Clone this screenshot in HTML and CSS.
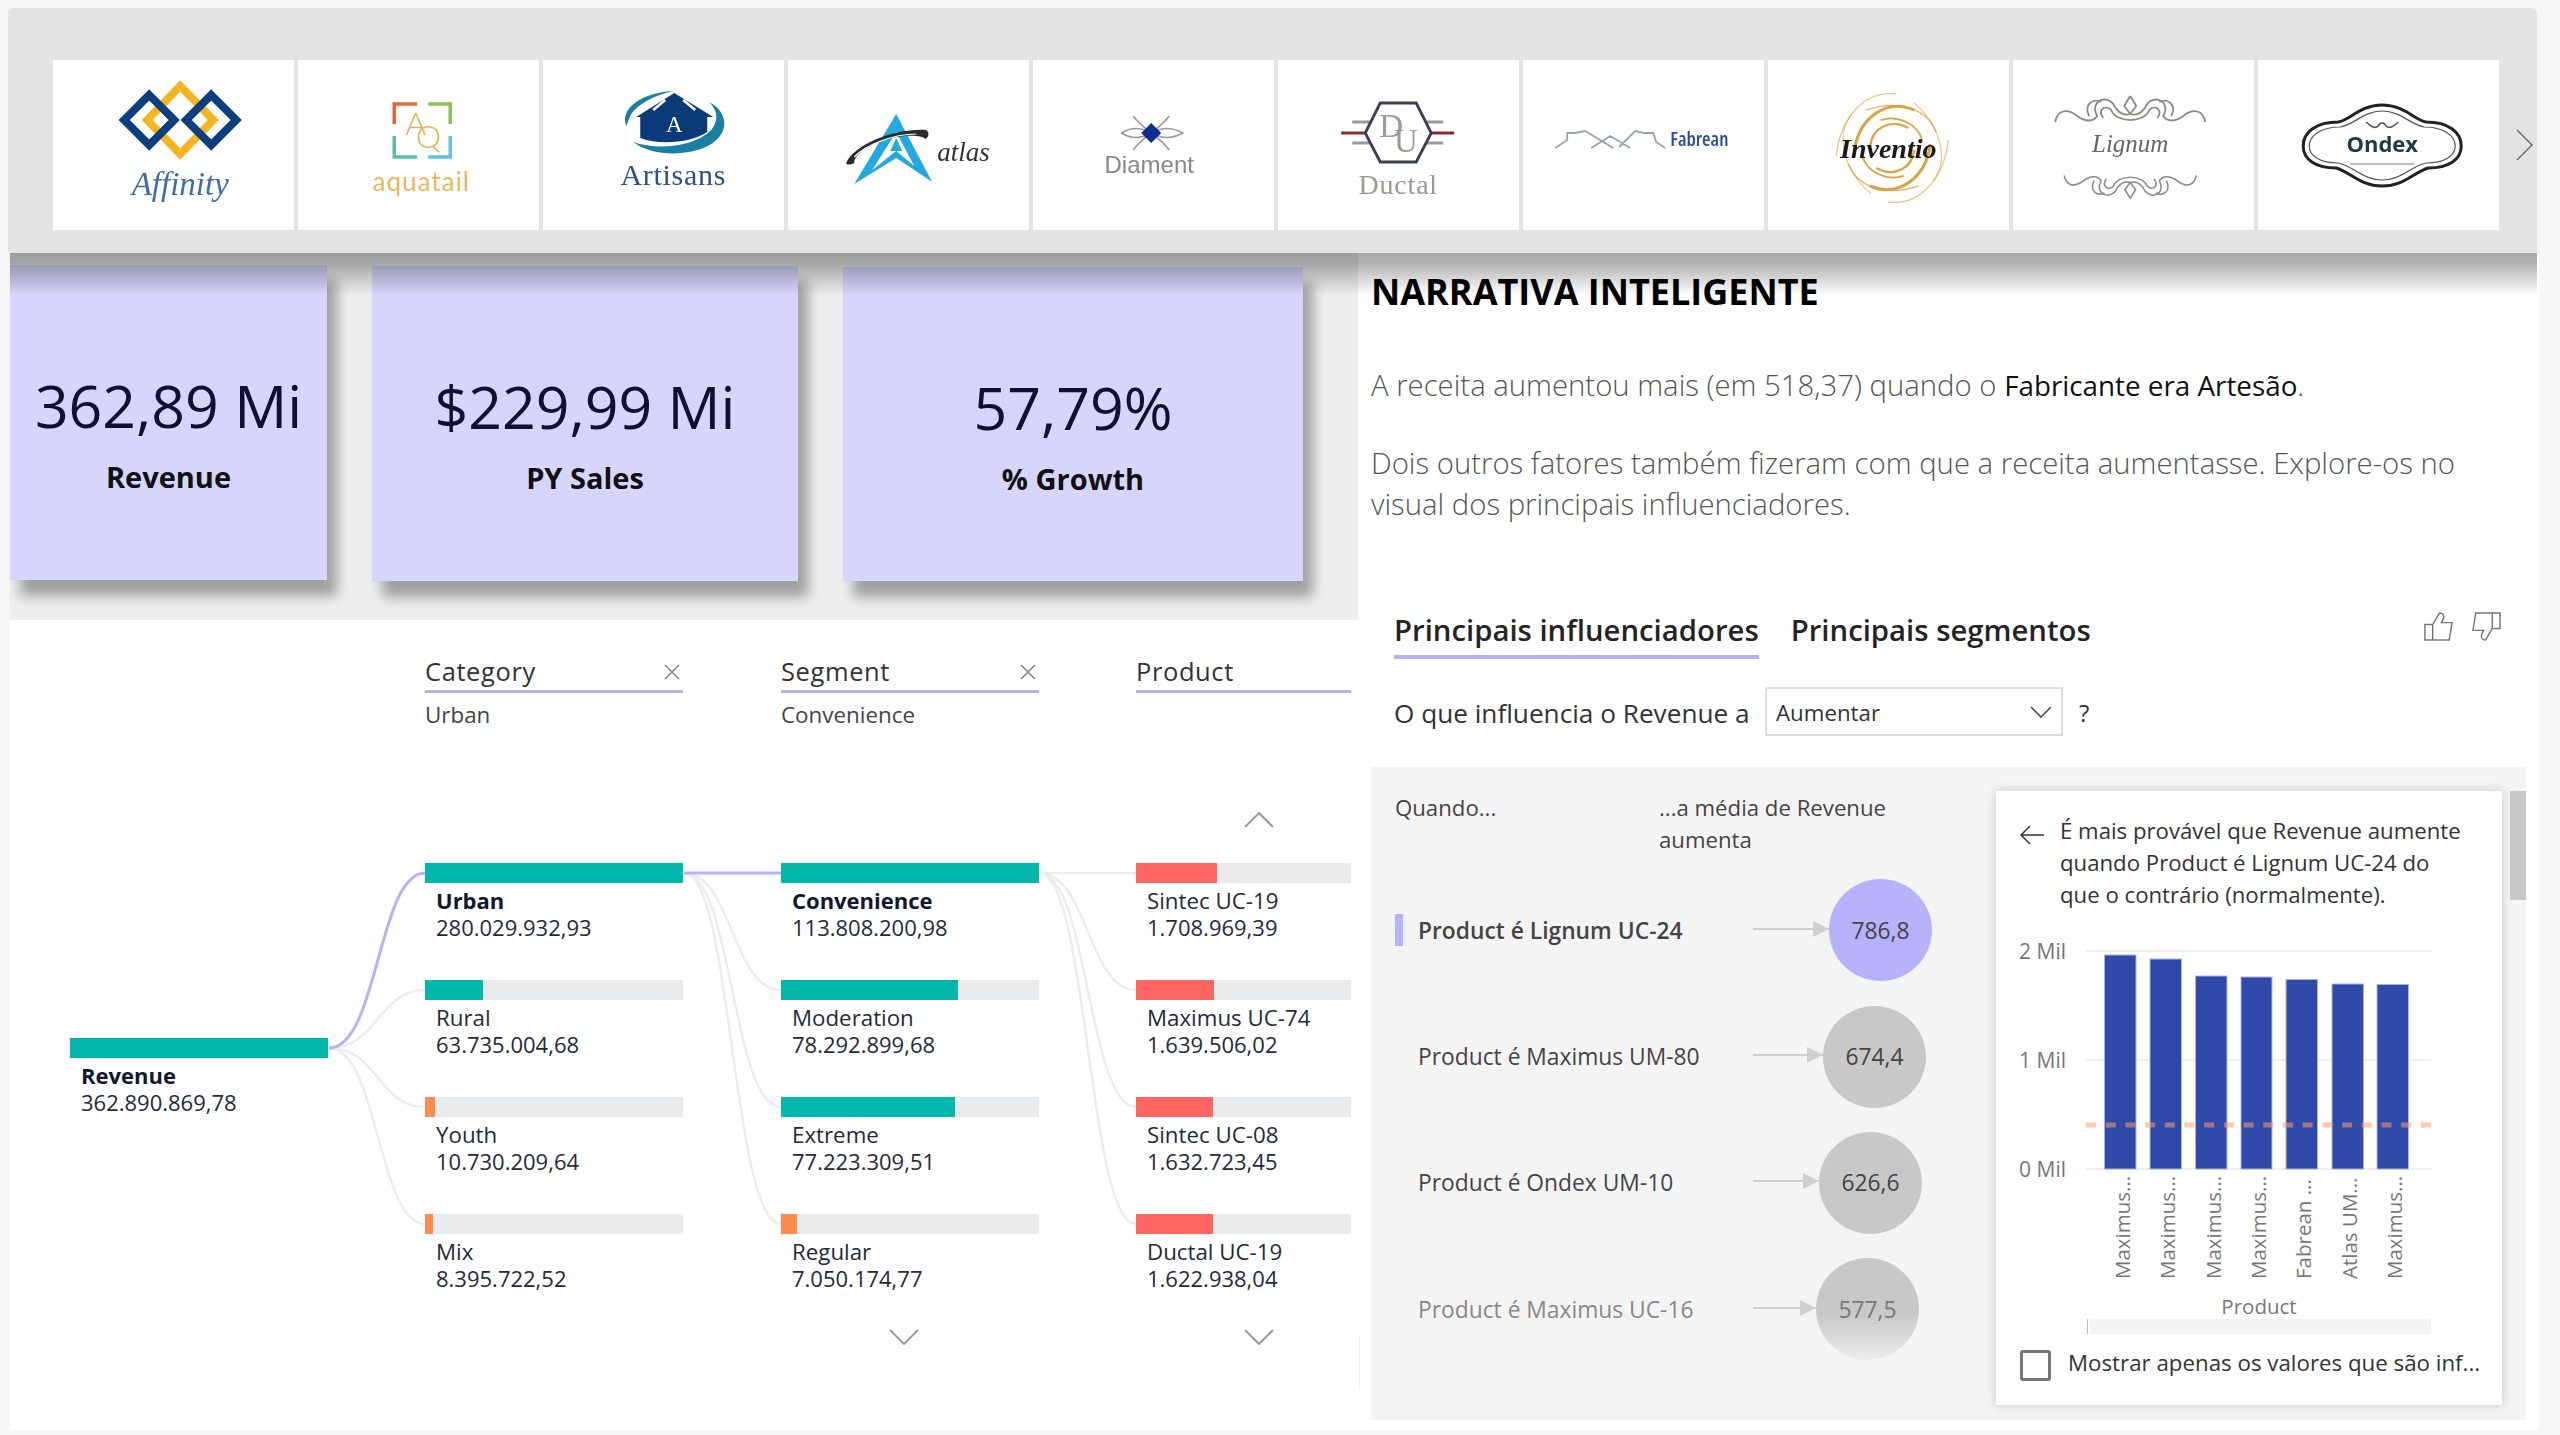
FILE: index.html
```html
<!DOCTYPE html>
<html lang="pt">
<head>
<meta charset="utf-8">
<title>Report</title>
<link rel="stylesheet" href="styles.css">
</head>
<body>
<div class="report">
  <header class="band">
    <div class="logos">
      <div class="logo"><svg viewBox="0 0 241 170"><g fill="none" stroke-width="8"><path d="M127 26 L160 60 L127 94 L94 60 Z" stroke="#f5b51e"/><path d="M96 35 L121 60 L96 85 L71 60 Z" stroke="#0d3f7f"/><path d="M158 35 L183 60 L158 85 L133 60 Z" stroke="#0d3f7f"/></g><text x="127" y="135" class="t-aff">Affinity</text></svg></div>
      <div class="logo"><svg viewBox="0 0 241 170"><g fill="none" stroke-width="3.5"><path d="M96 64 V44 H119" stroke="#e0663a"/><path d="M130 44 H152 V64" stroke="#8cc152"/><path d="M96 76 V97 H119" stroke="#5bbfa8"/><path d="M130 97 H152 V76" stroke="#5bc4e8"/></g><text x="107" y="75" class="t-aq">A<tspan dx="-10" dy="13">Q</tspan></text><text x="123" y="131" class="t-aqua">aquatail</text></svg></div>
      <div class="logo"><svg viewBox="0 0 241 170"><path d="M166 42 C188 54 186 78 160 88 C140 96 108 96 90 82 C112 90 150 88 168 70 C176 60 174 50 166 42 Z" fill="#1a7fa5"/><path d="M83 66 C76 48 100 32 131 31 C110 35 92 46 87 56 Z" fill="#1a7fa5"/><path d="M131 33 L170 57 L164 57 V72 C150 82 118 86 97 78 V57 L93 57 Z" fill="#0b3a78"/><path d="M110 50 L122 40 M152 50 L140 40" stroke="#fff" stroke-width="2.5"/><text x="131" y="72" class="t-arta">A</text><text x="130" y="125" class="t-art">Artisans</text></svg></div>
      <div class="logo"><svg viewBox="0 0 241 170"><path d="M108 54 L144 122 L108 98 L66 124 Z" fill="#22a9e0"/><path d="M108 72 L126 106 L108 91 L84 110 Z" fill="#fff"/><path d="M108 78 L114 91 L102 91 Z" fill="#22a9e0"/><path d="M58 103 C66 84 108 68 138 70 C142 73 140 78 137 79 C134 75 112 74 94 81 C78 87 66 95 66 103 C62 105 58 105 58 103 Z" fill="#2a2a2a"/><path d="M66 97 C76 86 104 74 128 74" fill="none" stroke="#fff" stroke-width="1.2"/><text x="149" y="101" class="t-atl">atlas</text></svg></div>
      <div class="logo"><svg viewBox="0 0 241 170"><g fill="none" stroke="#999" stroke-width="1.6"><path d="M100 56 C106 64 112 68 118 73 C124 68 130 64 136 56"/><path d="M100 90 C106 82 112 78 118 73 C124 78 130 82 136 90"/><path d="M88 73 C100 66 108 68 118 73 C128 68 136 66 150 73"/><path d="M88 73 C100 80 108 78 118 73 C128 78 136 80 150 73"/></g><path d="M118 63 L128 73 L118 83 L108 73 Z" fill="#0e2f8f"/><text x="116" y="113" class="t-dia">Diament</text></svg></div>
      <div class="logo"><svg viewBox="0 0 241 170"><path d="M74 62 H92 M148 62 H165 M74 83 H92 M148 83 H165" stroke="#999" stroke-width="3"/><path d="M63 73 H88 M152 73 H176" stroke="#8a2a2a" stroke-width="3"/><path d="M102 43 H138 L153 73 L138 102 H102 L87 73 Z" fill="#fff" stroke="#3a3f52" stroke-width="2.8"/><text x="101" y="77" class="t-du">D<tspan dx="-9" dy="15">U</tspan></text><text x="120" y="134" class="t-duc">Ductal</text></svg></div>
      <div class="logo"><svg viewBox="0 0 241 170"><path d="M32 88 L44 80 V73 H52 L62 71 L90 88 M68 88 L87 76 L107 88 M96 87 L112 71 L121 73 H130 L133 82 L142 88" fill="none" stroke="#9aa3ad" stroke-width="1.8"/><text x="147" y="86" class="t-fab">Fabrean</text></svg></div>
      <div class="logo"><svg viewBox="0 0 241 170"><g transform="translate(124 88)" fill="none" stroke="#d9a441"><g><path d="M4 -54 C-28 -58 -52 -30 -56 8" stroke-width="1.4" opacity=".6"/><path d="M22 -38 C-6 -50 -34 -30 -38 4" stroke-width="3"/><path d="M16 -20 C-2 -30 -20 -20 -22 -2" stroke-width="2.4"/></g><g transform="rotate(180)"><path d="M4 -54 C-28 -58 -52 -30 -56 8" stroke-width="1.4" opacity=".6"/><path d="M22 -38 C-6 -50 -34 -30 -38 4" stroke-width="3"/><path d="M16 -20 C-2 -30 -20 -20 -22 -2" stroke-width="2.4"/></g><g transform="rotate(60)"><path d="M8 -46 C-18 -50 -40 -28 -46 4" stroke-width="1.4" opacity=".8"/><path d="M8 -30 C-8 -34 -26 -22 -30 -4" stroke-width="1.8"/></g><g transform="rotate(240)"><path d="M8 -46 C-18 -50 -40 -28 -46 4" stroke-width="1.4" opacity=".8"/><path d="M8 -30 C-8 -34 -26 -22 -30 -4" stroke-width="1.8"/></g><g transform="rotate(120)"><path d="M8 -52 C-18 -56 -44 -30 -50 4" stroke-width="1.2" opacity=".6"/></g><g transform="rotate(300)"><path d="M8 -52 C-18 -56 -44 -30 -50 4" stroke-width="1.2" opacity=".6"/></g></g><text x="120" y="98" class="t-inv">Inventio</text></svg></div>
      <div class="logo"><svg viewBox="0 0 241 170"><g fill="none" stroke="#8a8a86" stroke-width="1.8"><g><path d="M42 62 C44 50 54 48 64 56 C72 62 80 62 84 56 C76 42 92 34 100 44 C104 52 110 56 117 54"/><path d="M76 56 C70 44 80 38 88 42 M90 58 C84 50 92 44 98 50 C100 56 108 60 117 60"/><path d="M117 36 L111 46 L117 54"/></g><g transform="matrix(-1 0 0 1 234 0)"><path d="M42 62 C44 50 54 48 64 56 C72 62 80 62 84 56 C76 42 92 34 100 44 C104 52 110 56 117 54"/><path d="M76 56 C70 44 80 38 88 42 M90 58 C84 50 92 44 98 50 C100 56 108 60 117 60"/><path d="M117 36 L111 46 L117 54"/></g><g transform="matrix(.88 0 0 -.88 14 170)"><path d="M42 62 C44 50 54 48 64 56 C72 62 80 62 84 56 C76 42 92 34 100 44 C104 52 110 56 117 54"/><path d="M76 56 C70 44 80 38 88 42 M90 58 C84 50 92 44 98 50 C100 56 108 60 117 60"/><path d="M117 36 L111 46 L117 54"/></g><g transform="matrix(-.88 0 0 -.88 220 170)"><path d="M42 62 C44 50 54 48 64 56 C72 62 80 62 84 56 C76 42 92 34 100 44 C104 52 110 56 117 54"/><path d="M76 56 C70 44 80 38 88 42 M90 58 C84 50 92 44 98 50 C100 56 108 60 117 60"/><path d="M117 36 L111 46 L117 54"/></g></g><text x="117" y="92" class="t-lig">Lignum</text></svg></div>
      <div class="logo"><svg viewBox="0 0 241 170"><path d="M124 45 C146 45 156 60 168 62 C190 62 203 72 203 86 C203 100 190 108 170 108 C156 112 146 126 124 126 C102 126 92 112 78 108 C58 108 45 100 45 86 C45 72 58 62 80 62 C92 60 102 45 124 45 Z" fill="#fff" stroke="#222" stroke-width="3"/><path d="M124 51 C143 51 152 65 166 67 C186 67 197 76 197 86 C197 96 186 103 168 103 C153 106 143 120 124 120 C105 120 95 106 80 103 C62 103 51 96 51 86 C51 76 62 67 82 67 C96 65 105 51 124 51 Z" fill="none" stroke="#555" stroke-width="1.2"/><path d="M108 62 C113 67 117 69 120 66 C122 62 126 62 128 66 C131 69 135 67 140 62" fill="none" stroke="#555" stroke-width="1.6"/><path d="M92 104 H156" stroke="#bbb" stroke-width="2"/><text x="124" y="92" class="t-ond">Ondex</text></svg></div>
    </div>
    <svg class="next" viewBox="0 0 17 32"><path d="M1 1 L16 16 L1 31" fill="none" stroke="#666" stroke-width="1.4"/></svg>
  </header>

  <main class="main">
    <section class="left">
      <div class="kpis">
        <div class="kpi kpi-a"><div class="kpi-val">362,89 Mi</div><div class="kpi-lab">Revenue</div></div>
        <div class="kpi kpi-b"><div class="kpi-val">$229,99 Mi</div><div class="kpi-lab">PY Sales</div></div>
        <div class="kpi kpi-c"><div class="kpi-val">57,79%</div><div class="kpi-lab">% Growth</div></div>
      </div>

      <div class="tree">
        <svg class="links" viewBox="10 620 1350 810">
          <g fill="none" stroke="#ececec" stroke-width="2.5">
            <path d="M329 1048 C378 1048 378 990 425 990"/>
            <path d="M329 1048 C378 1048 378 1107 425 1107"/>
            <path d="M329 1048 C378 1048 378 1224 425 1224"/>
            <path d="M684 873 C732 873 732 990 781 990"/>
            <path d="M684 873 C732 873 732 1107 781 1107"/>
            <path d="M684 873 C732 873 732 1224 781 1224"/>
            <path d="M1039 873 H1136"/>
            <path d="M1039 873 C1088 873 1088 990 1136 990"/>
            <path d="M1039 873 C1088 873 1088 1107 1136 1107"/>
            <path d="M1039 873 C1088 873 1088 1224 1136 1224"/>
          </g>
          <g fill="none" stroke="#b8b2f5" stroke-width="3">
            <path d="M329 1048 C378 1048 378 873 425 873"/>
            <path d="M684 873 H781"/>
          </g>
        </svg>

        <div class="col col-root">
          <div class="bar"><div class="fill teal fill-full"></div></div>
          <div class="name strong">Revenue</div>
          <div class="num">362.890.869,78</div>
        </div>

        <div class="col col-1">
          <div class="head">
            <div class="title">Category<svg class="x" viewBox="0 0 18 18"><path d="M2 2 L16 16 M16 2 L2 16" stroke="#888" stroke-width="1.6"/></svg></div>
            <div class="sub">Urban</div>
          </div>
          <div class="node"><div class="bar"><div class="fill teal fill-full"></div></div><div class="name strong">Urban</div><div class="num">280.029.932,93</div></div>
          <div class="node"><div class="bar"><div class="fill teal" style="width:58px"></div></div><div class="name">Rural</div><div class="num">63.735.004,68</div></div>
          <div class="node"><div class="bar"><div class="fill orange" style="width:10px"></div></div><div class="name">Youth</div><div class="num">10.730.209,64</div></div>
          <div class="node"><div class="bar"><div class="fill orange" style="width:8px"></div></div><div class="name">Mix</div><div class="num">8.395.722,52</div></div>
        </div>

        <div class="col col-2">
          <div class="head">
            <div class="title">Segment<svg class="x" viewBox="0 0 18 18"><path d="M2 2 L16 16 M16 2 L2 16" stroke="#888" stroke-width="1.6"/></svg></div>
            <div class="sub">Convenience</div>
          </div>
          <div class="node"><div class="bar"><div class="fill teal fill-full"></div></div><div class="name strong">Convenience</div><div class="num">113.808.200,98</div></div>
          <div class="node"><div class="bar"><div class="fill teal" style="width:177px"></div></div><div class="name">Moderation</div><div class="num">78.292.899,68</div></div>
          <div class="node"><div class="bar"><div class="fill teal" style="width:174px"></div></div><div class="name">Extreme</div><div class="num">77.223.309,51</div></div>
          <div class="node"><div class="bar"><div class="fill orange" style="width:16px"></div></div><div class="name">Regular</div><div class="num">7.050.174,77</div></div>
          <svg class="chev chev-down" viewBox="0 0 30 16"><path d="M1 1 L15 15 L29 1" fill="none" stroke="#999" stroke-width="2"/></svg>
        </div>

        <div class="col col-3">
          <div class="head">
            <div class="title">Product</div>
            <svg class="chev chev-up" viewBox="0 0 30 16"><path d="M1 15 L15 1 L29 15" fill="none" stroke="#999" stroke-width="2"/></svg>
          </div>
          <div class="node"><div class="bar"><div class="fill red" style="width:81px"></div></div><div class="name">Sintec UC-19</div><div class="num">1.708.969,39</div></div>
          <div class="node"><div class="bar"><div class="fill red" style="width:78px"></div></div><div class="name">Maximus UC-74</div><div class="num">1.639.506,02</div></div>
          <div class="node"><div class="bar"><div class="fill red" style="width:77px"></div></div><div class="name">Sintec UC-08</div><div class="num">1.632.723,45</div></div>
          <div class="node"><div class="bar"><div class="fill red" style="width:77px"></div></div><div class="name">Ductal UC-19</div><div class="num">1.622.938,04</div></div>
          <svg class="chev chev-down" viewBox="0 0 30 16"><path d="M1 1 L15 15 L29 1" fill="none" stroke="#999" stroke-width="2"/></svg>
        </div>
      </div>
    </section>

    <section class="right">
      <h1 class="narr-title">NARRATIVA INTELIGENTE</h1>
      <p class="narr narr-1">A receita aumentou mais (em 518,37) quando o <span class="hl">Fabricante era Artesão</span>.</p>
      <p class="narr narr-2">Dois outros fatores também fizeram com que a receita aumentasse. Explore-os no visual dos principais influenciadores.</p>

      <div class="tabs">
        <div class="tab tab-on">Principais influenciadores</div>
        <div class="tab">Principais segmentos</div>
        <div class="thumbs">
          <svg class="thumb" viewBox="0 0 32 32"><path d="M10 14 H2 V30 H10 M10 14 L17 2 C21 2 22 5 21 8 L19 12 H30 L27 30 H10 Z" fill="none" stroke="#777" stroke-width="1.5"/></svg>
          <svg class="thumb" viewBox="0 0 32 32"><path d="M22 18 H30 V2 H22 M22 18 L15 30 C11 30 10 27 11 24 L13 20 H2 L5 2 H22 Z" fill="none" stroke="#777" stroke-width="1.5"/></svg>
        </div>
      </div>

      <div class="prompt">
        <span class="prompt-text">O que influencia o Revenue a</span>
        <div class="select"><span class="select-val">Aumentar</span><svg class="select-chev" viewBox="0 0 22 12"><path d="M1 1 L11 11 L21 1" fill="none" stroke="#444" stroke-width="1.5"/></svg></div>
        <span class="prompt-q">?</span>
      </div>

      <div class="panel">
        <div class="inf">
          <div class="inf-head"><div class="inf-when">Quando...</div><div class="inf-avg">...a média de Revenue aumenta</div></div>
          <div class="row row-on"><span class="mark"></span><span class="label">Product é Lignum UC-24</span><span class="arrow" style="width:76px"></span><span class="dot dot-on">786,8</span></div>
          <div class="row"><span class="mark"></span><span class="label">Product é Maximus UM-80</span><span class="arrow" style="width:70px"></span><span class="dot">674,4</span></div>
          <div class="row"><span class="mark"></span><span class="label">Product é Ondex UM-10</span><span class="arrow" style="width:66px"></span><span class="dot">626,6</span></div>
          <div class="row row-fade"><span class="mark"></span><span class="label">Product é Maximus UC-16</span><span class="arrow" style="width:63px"></span><span class="dot">577,5</span></div>
        </div>

        <div class="card">
          <div class="card-head">
            <svg class="back" viewBox="0 0 24 20"><path d="M10 1 L1 10 L10 19 M1 10 H24" fill="none" stroke="#333" stroke-width="1.5"/></svg>
            <div class="card-text">É mais provável que Revenue aumente quando Product é Lignum UC-24 do que o contrário (normalmente).</div>
          </div>
          <svg class="chart" viewBox="1996 912 506 428">
            <g stroke="#eeeeee" stroke-width="2"><path d="M2086 952 H2431"/><path d="M2086 1061 H2431"/><path d="M2086 1170 H2431"/></g>
            <g class="ytick"><text x="2066" y="960">2 Mil</text><text x="2066" y="1069">1 Mil</text><text x="2066" y="1178">0 Mil</text></g>
            <g fill="#2f4aa8" stroke="#a9b4dc" stroke-width="1">
              <rect x="2104.5" y="956" width="31.5" height="214"/>
              <rect x="2150" y="960" width="31.5" height="210"/>
              <rect x="2195.5" y="977" width="31.5" height="193"/>
              <rect x="2241" y="978" width="31" height="192"/>
              <rect x="2286" y="980.500" width="31.500" height="189.500"/>
              <rect x="2332" y="985" width="31.500" height="185"/>
              <rect x="2377" y="985.500" width="31.500" height="184.500"/>
            </g>
            <path d="M2086 1126 H2431" stroke="#ff9d64" stroke-opacity=".55" stroke-width="5" stroke-dasharray="10 9.700"/>
            <g class="xtick">
              <text transform="translate(2130 1280) rotate(-90)">Maximus...</text>
              <text transform="translate(2175 1280) rotate(-90)">Maximus...</text>
              <text transform="translate(2221 1280) rotate(-90)">Maximus...</text>
              <text transform="translate(2266 1280) rotate(-90)">Maximus...</text>
              <text transform="translate(2311 1280) rotate(-90)">Fabrean ...</text>
              <text transform="translate(2357 1280) rotate(-90)">Atlas UM...</text>
              <text transform="translate(2402 1280) rotate(-90)">Maximus...</text>
            </g>
            <text class="xtitle" x="2259" y="1315">Product</text>
            <rect x="2090" y="1320" width="341" height="15" fill="#f3f3f3"/>
            <rect x="2087" y="1320" width="1" height="15" fill="#bbb"/>
          </svg>
          <div class="check"><span class="box"></span><span class="check-text">Mostrar apenas os valores que são inf...</span></div>
        </div>

        <div class="scroll"><div class="thumbbar"></div></div>
      </div>
    </section>
  </main>
</div>
</body>
</html>
```

FILE: styles.css
```css
* { box-sizing: border-box; }
html, body { margin: 0; padding: 0; }
body {
  width: 2560px;
  height: 1435px;
  overflow: hidden;
  background: #f6f6f6;
  font-family: "Open Sans", "Noto Sans", "Liberation Sans", sans-serif;
  font-stretch: 90%;
  color: #252423;
}
.report { padding: 8px 23px 0 8px; }

/* top logo band */
.band {
  position: relative;
  z-index: 5;
  display: flex;
  align-items: center;
  height: 245px;
  padding: 52px 4px 23px 45px;
  background: #e4e4e4;
  border-radius: 6px 6px 0 0;
}
.band::after {
  content: "";
  position: absolute;
  left: 2px;
  right: 0;
  top: 100%;
  height: 42px;
  background: linear-gradient(rgba(0, 0, 0, .34), rgba(0, 0, 0, .3) 25%, rgba(0, 0, 0, 0));
  pointer-events: none;
}
.logos {
  display: grid;
  grid-template-columns: repeat(10, 1fr);
  gap: 3.5px;
  width: 2446px;
  height: 170px;
}
.logo { background: #fff; height: 170px; }
.logo svg { display: block; width: 100%; height: 100%; filter: blur(.35px); }
.next { width: 17px; height: 32px; margin-left: 17px; }

.t-aff { font: italic 33px "Liberation Serif", serif; fill: #3a6ea5; text-anchor: middle; }
.t-aq { font: 300 32px "Lato", sans-serif; fill: #e8b04a; }
.t-aqua { font: 400 26px "Lato", sans-serif; fill: #eeb656; text-anchor: middle; letter-spacing: 1px; }
.t-arta { font: 400 23px "Liberation Serif", serif; fill: #fff; text-anchor: middle; }
.t-art { font: 400 30px "Liberation Serif", serif; fill: #2b5285; text-anchor: middle; letter-spacing: .7px; }
.t-atl { font: italic 27px "Liberation Serif", serif; fill: #333; }
.t-dia { font: 400 24px "Liberation Sans", sans-serif; fill: #888; text-anchor: middle; }
.t-du { font: 400 33px "Liberation Serif", serif; fill: #9a9c94; }
.t-duc { font: 400 28px "Liberation Serif", serif; fill: #999b93; text-anchor: middle; letter-spacing: .8px; }
.t-fab { font: 600 19.500px "Open Sans", sans-serif; fill: #2a4a9a; font-stretch: 85%; }
.t-inv { font: italic 700 28px "Liberation Serif", serif; fill: #1a1a1a; text-anchor: middle; }
.t-lig { font: italic 25px "Liberation Serif", serif; fill: #666; text-anchor: middle; }
.t-ond { font: 700 22px "Open Sans", sans-serif; fill: #1e3a45; text-anchor: middle; font-stretch: 90%; }

.main {
  display: grid;
  grid-template-columns: 1350px 1179px;
  height: 1177px;
  margin-left: 2px;
  background: #fff;
}

/* KPI cards */
.left { min-width: 0; }
.kpis {
  display: flex;
  align-items: flex-start;
  gap: 45px;
  width: 1348px;
  height: 367px;
  padding-top: 12px;
  background: #eeedef;
}
.kpi {
  height: 315px;
  padding-top: 105px;
  text-align: center;
  background: #d7d5fb;
  box-shadow: 10px 16px 12px rgba(0, 0, 0, .33);
}
.kpi-a { width: 317px; }
.kpi-b { width: 426px; margin-top: 1px; }
.kpi-c { width: 460px; margin-top: 2px; height: 314px; }
.kpi-val { font-size: 59px; line-height: 70px; color: #0e1230; }
.kpi-lab { margin-top: 17px; font-size: 29px; line-height: 40px; font-weight: 700; color: #111; }

/* decomposition tree */
.tree {
  position: relative;
  display: flex;
  height: 810px;
  padding: 30px 0 0 60px;
  background: #fff;
}
.tree::after {
  content: "";
  position: absolute;
  left: 1349px;
  top: 715px;
  width: 1px;
  height: 55px;
  background: #eee;
}
.links { position: absolute; left: 0; top: 0; width: 1350px; height: 810px; }
.col { position: relative; flex: none; width: 258px; }
.col-root { padding-top: 388px; margin-right: 97px; }
.col-1 { margin-right: 98px; }
.col-2 { margin-right: 97px; }
.col-3 { width: 215px; }
.head { position: relative; height: 213px; }
.title {
  display: flex;
  justify-content: space-between;
  align-items: center;
  height: 43px;
  padding-top: 1px;
  font-size: 25.500px;
  font-weight: 500;
  letter-spacing: .6px;
  color: #333;
  border-bottom: 3px solid #b8b2e8;
}
.x { width: 18px; height: 18px; margin-right: 2px; margin-top: 2px; }
.sub { margin-top: 2px; font-size: 22.400px; line-height: 39px; color: #444; }
.node { height: 117px; }
.bar { position: relative; height: 20px; background: #e9eaec; }
.fill { height: 20px; }
.fill-full { width: 100%; }
.teal { background: #01b8aa; }
.orange { background: #fd8a4f; }
.red { background: #fe6460; }
.name, .num { padding-left: 11px; font-size: 22px; line-height: 27px; color: #252a3a; }
.name { margin-top: 5px; line-height: 26px; font-size: 22.300px; }
.strong { font-weight: 700; color: #111830; font-size: 22px; margin-top: 4px; line-height: 27px; }
.chev { position: absolute; width: 30px; height: 16px; }
.chev-up { left: 108px; top: 162px; }
.chev-down { left: 108px; top: 679px; }

/* narrative */
.right { background: #fff; min-width: 0; position: relative; }
.narr-title {
  margin: 19px 0 0 11px;
  font-size: 36px;
  line-height: 40px;
  font-weight: 700;
  color: #000;
}
.narr {
  margin: 0 30px 0 11px;
  font-size: 29.300px;
  font-weight: 300;
  color: #555;
}
.narr-1 { margin-top: 52px; line-height: 42px; }
.narr-2 { margin-top: 37px; line-height: 41px; }
.hl { color: #111; font-weight: 400; font-size: 27.800px; }

.tabs {
  display: flex;
  align-items: flex-start;
  gap: 32px;
  margin: 85px 0 0 34px;
  height: 49px;
  position: relative;
}
.tab {
  height: 49px;
  font-size: 29.300px;
  line-height: 40px;
  font-weight: 600;
  color: #252423;
}
.tab-on { border-bottom: 4px solid #b8b2f5; }
.thumbs { margin-left: auto; margin-right: 37px; margin-top: 1px; display: flex; gap: 17px; }
.thumb { width: 31px; height: 31px; }

.prompt {
  display: flex;
  align-items: center;
  gap: 16px;
  height: 49px;
  margin: 28px 0 0 34px;
  font-size: 26.200px;
}
.prompt-text { width: 355px; white-space: nowrap; color: #333; position: relative; top: 1px; }
.select {
  display: flex;
  align-items: center;
  justify-content: space-between;
  width: 298px;
  height: 49px;
  padding: 0 9px;
  background: #fff;
  border: 2px solid #ddd;
  font-size: 22.300px;
  color: #333;
}
.select-val { padding-top: 2px; }
.select-chev { width: 22px; height: 12px; }
.prompt-q { color: #333; font-size: 24px; padding-top: 2px; }

/* influencers panel */
.panel {
  display: flex;
  width: 1155px;
  height: 653px;
  margin: 31px 0 0 11px;
  padding-top: 24px;
  background: #f4f4f4;
}
.inf { width: 625px; flex: none; padding-top: 1px; }
.inf-head { display: flex; padding-left: 24px; height: 64px; margin-bottom: 11px; font-size: 22.200px; line-height: 32px; color: #444; }
.inf-when { width: 264px; }
.inf-avg { width: 280px; }
.row { display: flex; align-items: center; height: 126.400px; padding-left: 24px; color: #444; font-size: 22.800px; }
.mark { width: 8px; height: 32px; margin-right: 15px; flex: none; }
.row-on .mark { background: #b8b2fc; }
.label { width: 335px; flex: none; white-space: nowrap; }
.row-on .label { font-weight: 600; }
.arrow { position: relative; display: block; height: 2px; background: #cfcfcf; flex: none; margin-top: -3px; }
.arrow::after {
  content: "";
  position: absolute;
  right: 0;
  top: -7px;
  border-left: 16px solid #cfcfcf;
  border-top: 8px solid transparent;
  border-bottom: 8px solid transparent;
}
.dot {
  display: flex;
  align-items: center;
  justify-content: center;
  width: 103px;
  height: 102px;
  flex: none;
  border-radius: 50%;
  background: #c8c8c8;
  color: #444;
}
.dot-on { background: #b8b2fc; }
.row-fade .label { color: #888; }
.row-fade .dot { color: #777; background: linear-gradient(#c8c8c8 55%, #ececec); }

.card {
  width: 506px;
  height: 614px;
  flex: none;
  background: #fff;
  box-shadow: 0 0 10px rgba(0, 0, 0, .18);
}
.card-head { display: flex; align-items: flex-start; height: 120px; padding: 24px 24px 0 24px; }
.back { width: 24px; height: 20px; flex: none; margin: 10px 16px 0 0; }
.card-text { width: 410px; font-size: 22.200px; line-height: 32px; color: #333; }
.chart { display: block; width: 506px; height: 428px; }
.ytick text { font-size: 21px; fill: #777; text-anchor: end; }
.xtick text { font-size: 20.500px; fill: #777; }
.xtitle { font-size: 20.500px; fill: #777; text-anchor: middle; }
.check { display: flex; align-items: center; gap: 17px; margin: 11px 0 0 24px; }
.box { width: 31px; height: 31px; border: 3px solid #777; border-radius: 3px; flex: none; }
.check-text { font-size: 22.300px; line-height: 26px; margin-top: -6px; color: #333; white-space: nowrap; }

.scroll { width: 16px; margin-left: 8px; flex: none; }
.thumbbar { height: 109px; background: #c8c8c8; }
```
